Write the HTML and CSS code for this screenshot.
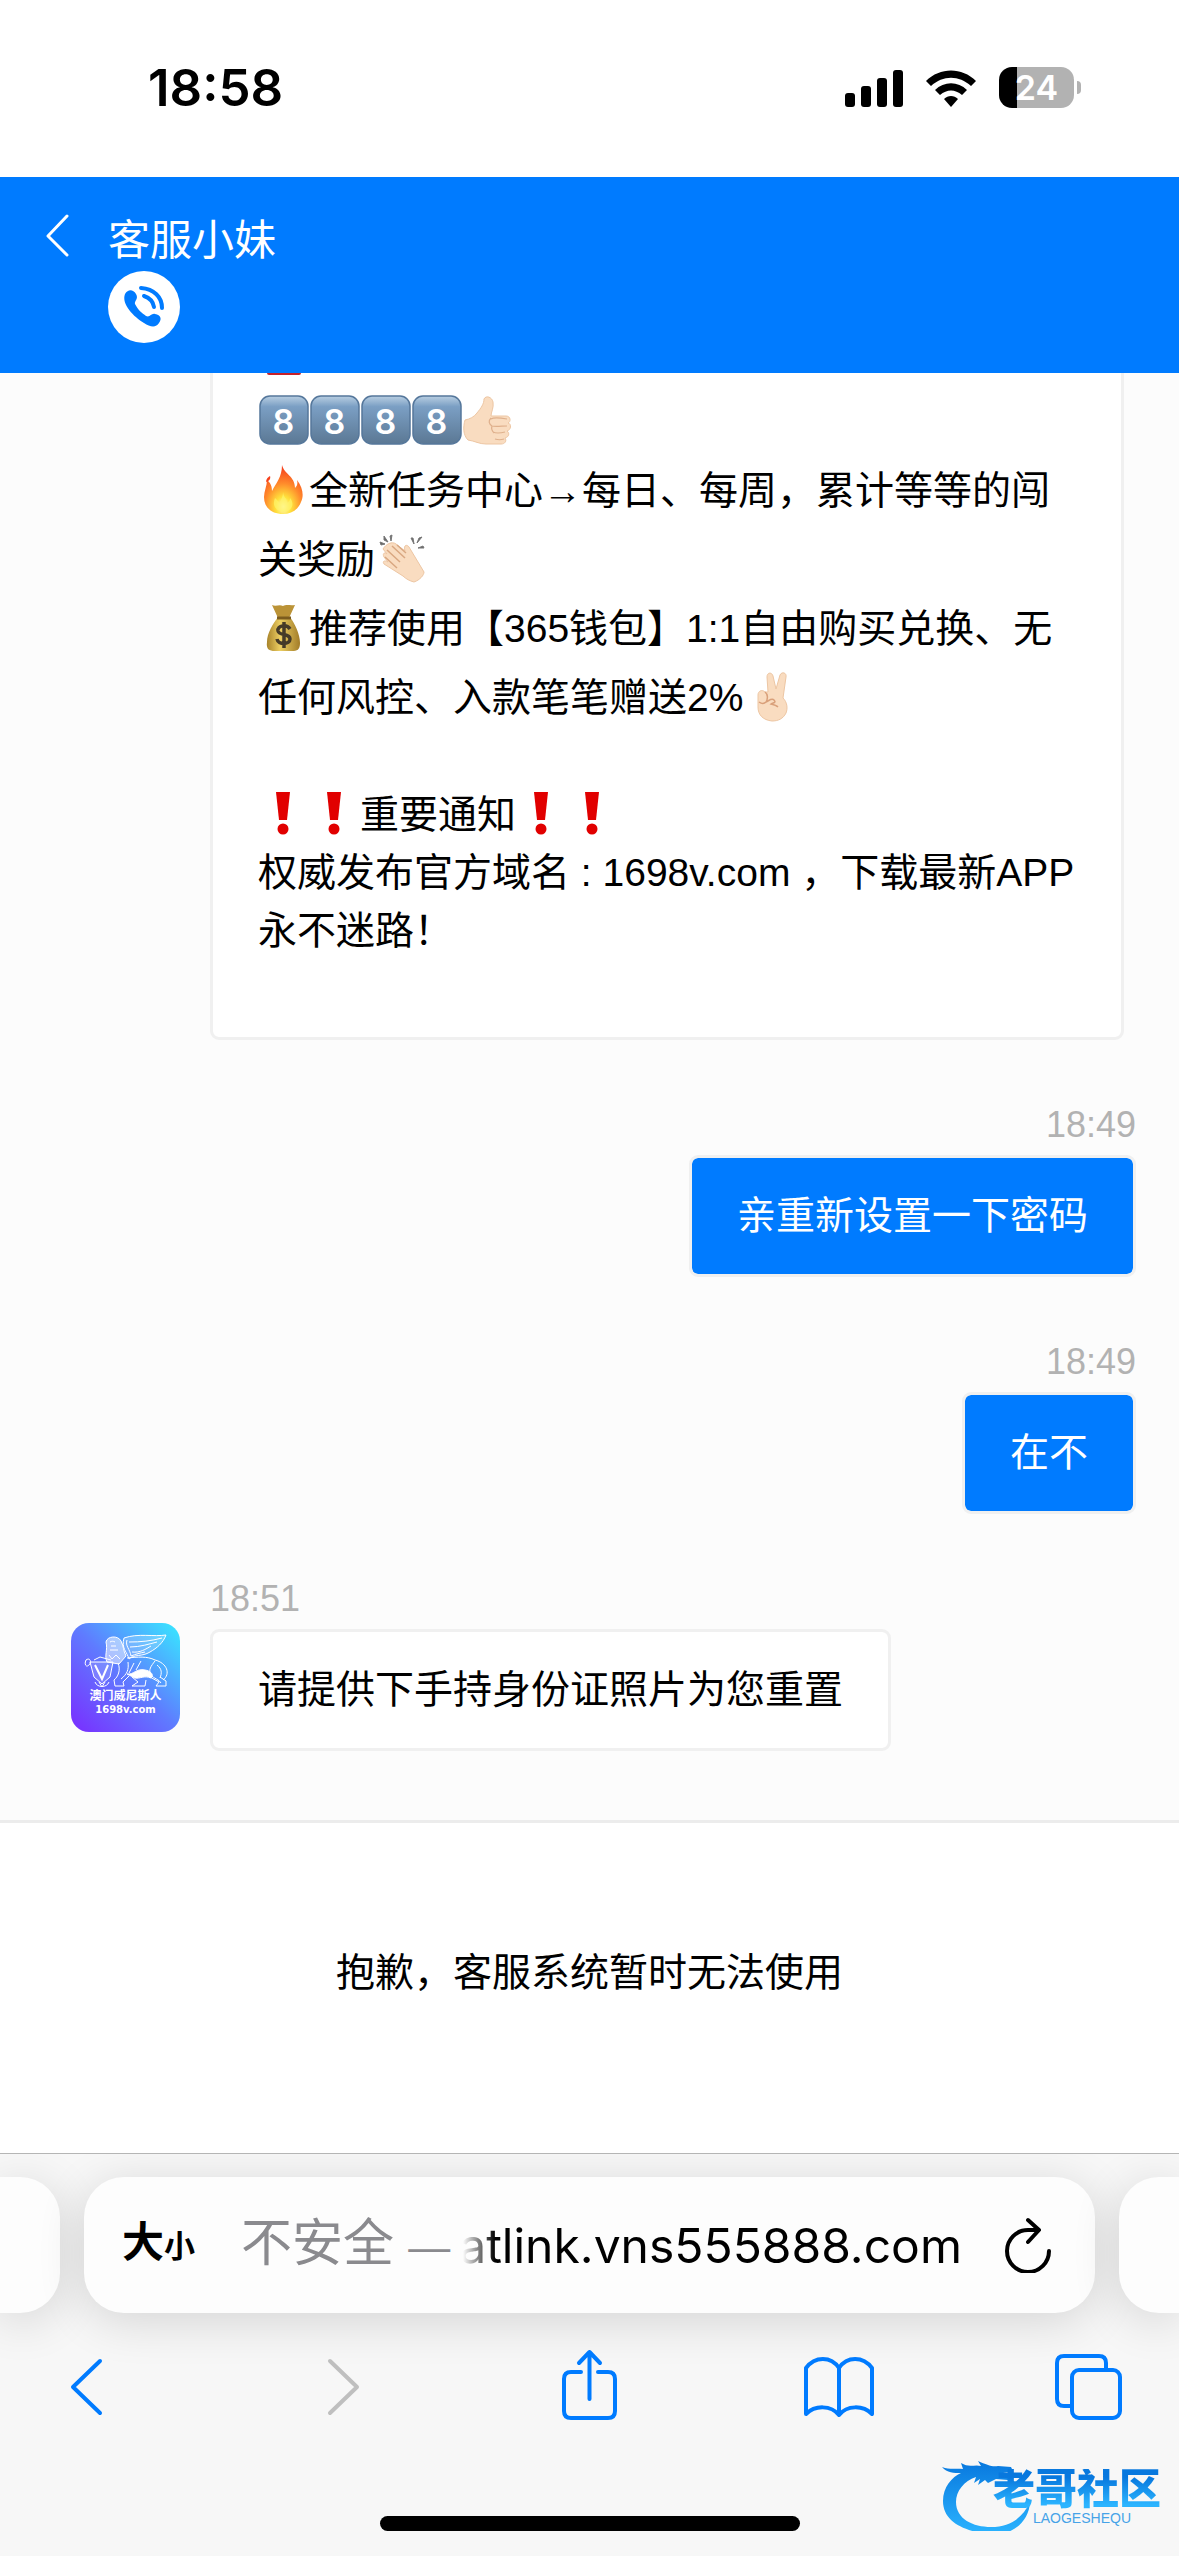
FILE: index.html
```html
<!DOCTYPE html>
<html lang="zh-CN">
<head>
    <meta charset="UTF-8">
    <meta name="viewport" content="width=device-width, initial-scale=1.0">
    <title>客服小妹</title>
    <link rel="stylesheet" href="styles.css">
</head>
<body>
    <!-- Shared emoji shapes -->
    <svg class="defs" aria-hidden="true">
        <defs>
            <linearGradient id="keyFill" x1="0" y1="0" x2="0" y2="1">
                <stop offset="0" stop-color="#b9cfe2"/>
                <stop offset="0.22" stop-color="#7b9fc4"/>
                <stop offset="1" stop-color="#5b7894"/>
            </linearGradient>
            <radialGradient id="fireFill" cx="0.5" cy="0.85" r="0.8">
                <stop offset="0" stop-color="#fffbd0"/>
                <stop offset="0.25" stop-color="#ffe23c"/>
                <stop offset="0.6" stop-color="#ff8a2b"/>
                <stop offset="1" stop-color="#f6401c"/>
            </radialGradient>
            <linearGradient id="bagFill" x1="0" y1="0" x2="1" y2="0">
                <stop offset="0" stop-color="#a8832a"/>
                <stop offset="0.4" stop-color="#ecce62"/>
                <stop offset="1" stop-color="#a27c28"/>
            </linearGradient>
            <symbol id="key" viewBox="0 0 51 51">
                <rect x="2" y="1" width="48" height="48" rx="10" fill="url(#keyFill)" stroke="#55779b" stroke-width="1.5"/>
            </symbol>
            <symbol id="bang" viewBox="0 0 51 51">
                <path d="M18 4h14l-3 28h-8z" fill="#e10000"/>
                <circle cx="25" cy="41" r="5.500" fill="#e10000"/>
            </symbol>
        </defs>
    </svg>

    <!-- Status bar -->
    <div class="status">
        <span class="clock">18:58</span>
        <div class="status-icons">
            <svg width="58" height="38" viewBox="0 0 58 38">
                <rect x="0" y="24" width="10" height="14" rx="3"/>
                <rect x="16" y="17" width="10" height="21" rx="3"/>
                <rect x="32" y="9" width="10" height="29" rx="3"/>
                <rect x="48" y="1" width="10" height="37" rx="3"/>
            </svg>
            <svg width="52" height="38" viewBox="0 0 52 38">
                <path d="M1 12C15-2 37-2 51 12l-5 5C34 6 18 6 6 17z"/>
                <path d="M10 21c9-9 23-9 32 0l-5 5c-7-6-15-6-22 0z"/>
                <path d="M19 30c4-4 10-4 14 0l-7 8z"/>
            </svg>
            <div class="battery"><span>24</span></div>
        </div>
    </div>

    <!-- Chat header -->
    <header class="header">
        <button class="back" aria-label="返回">
            <svg width="26" height="44" viewBox="0 0 26 44"><path d="M22 2L3 22l19 19"/></svg>
        </button>
        <div>
            <h1>客服小妹</h1>
            <button class="call" aria-label="语音通话">
                <svg width="72" height="72" viewBox="0 0 72 72">
                    <path d="M17 23c3-5 8-5 11 0 3 5-2 7-1 10 3 6 7 9 11 12 4 2 5-3 9-2 6 1 7 5 4 9-3 5-9 4-15 0C26 46 13 33 17 23z" fill="#007bff"/>
                    <path d="M36 25c6 2 9 5 10 11M33 17c13 1 21 9 21 20" fill="none" stroke="#007bff" stroke-width="4" stroke-linecap="round"/>
                </svg>
            </button>
        </div>
    </header>

    <!-- Messages -->
    <main class="chat">
        <div class="bubble notice">
            <p class="rich"><svg class="emoji" viewBox="0 0 51 51"><rect x="9" y="2" width="34" height="47" rx="2" fill="#c5222b"/></svg></p>
            <p class="rich"><span class="keycap"><svg class="emoji"><use href="#key"/></svg><b>8</b></span><span class="keycap"><svg class="emoji"><use href="#key"/></svg><b>8</b></span><span class="keycap"><svg class="emoji"><use href="#key"/></svg><b>8</b></span><span class="keycap"><svg class="emoji"><use href="#key"/></svg><b>8</b></span><svg class="emoji" viewBox="0 0 51 51">
                <path d="M3 25c5-1 9-3 12-7 4-5 7-9 7-14 2-4 8-2 9 3 1 6-2 10-2 14h15c5 0 5 6 2 7 4 1 3 7-1 8 3 2 2 6-2 7 2 3 0 6-4 6H24c-7 0-11-3-18-4-5-5-5-13-3-20z" fill="#f9dcc0" stroke="#edc6a3"/>
                <path d="M29 24c3-2 10-1 16 0M29 31c5 1 11 0 16 0M31 37c4 2 8 1 12 0M33 44c3 1 6 1 9 0M29 23c-3 3-2 6 1 8M30 31c-1 3 0 5 2 7" fill="none" stroke="#dfb08c" stroke-width="1.200"/>
            </svg></p>
            <p class="rich"><svg class="emoji" viewBox="0 0 51 51">
                <path d="M24 1c2 9 13 11 13 23 2-2 3-4 2-8 6 8 7 16 4 22-3 8-10 12-18 12C13 50 6 43 6 33c0-6 3-11 3-17 4 3 5 7 5 11 4-8 10-14 10-26z" fill="url(#fireFill)"/>
                <path d="M8 18c0-3 2-5 4-6 1 3-1 5-4 6z" fill="#f6401c"/>
                <path d="M25 28c1 7 4 5 4 11 2-1 3-3 3-5 5 6 2 13-6 14-9-1-12-7-9-14 2 2 3 3 5 5 1-4 3-6 3-11z" fill="#fff36b" fill-opacity="0.700"/>
            </svg>全新任务中心→每日、每周，累计等等的闯<br>关奖励<svg class="emoji" viewBox="0 0 51 51">
                <path d="M8 16c3-5 9-8 13-5l9 7c-2-6 2-7 4-4l6 10 9 15c0 3-4 8-10 10-4-1-8-3-11-6L9 31c-2-3 1-4 4-2l-4-5c-2-4 1-5 3-3z" fill="#f9dcc0" stroke="#edc6a3"/>
                <path d="M12 17l13 12M17 13l13 12M10 24l12 11M22 12l9 8" fill="none" stroke="#d9a781" stroke-width="1.5"/>
                <path d="M5 9l5 2-4 1zM9 3l4 6-4-2zM17 2l-1 6-1-5zM36 5l3 6-1-6zM47 4l-5 6 2-5zM49 15h-6l5-2z" fill="#666" stroke="#777"/>
            </svg></p>
            <p class="rich"><svg class="emoji" viewBox="0 0 51 51">
                <path d="M14 3c4 2 7-1 11 1 4-2 7 0 12-1l-6 13H20z" fill="#bb9337"/>
                <path d="M20 15h12c5 7 10 17 10 26 0 7-3 8-8 8H17c-6 0-9-2-8-9 0-9 6-18 11-25z" fill="url(#bagFill)"/>
                <path d="M19 16h14" stroke="#7c5c1e" stroke-width="3"/>
                <path d="M32 27c-3-5-13-4-12 2 1 5 12 2 12 8 0 6-12 6-13 0M26 20v26" fill="none" stroke="#453a28" stroke-width="3.500"/>
            </svg>推荐使用【365钱包】1:1自由购买兑换、无<br>任何风控、入款笔笔赠送2%<svg class="emoji" viewBox="0 0 51 51">
                <path d="M15 24c0-4 4-6 7-3h3L24 6c0-5 5-5 6-1l3 13 4-14c2-4 7-2 6 2l-3 21c4 4 5 10 3 15-3 6-8 8-14 8-9-1-14-6-14-14z" fill="#f9dcc0" stroke="#edc6a3"/>
                <path d="M22 21c3 2 3 7 1 10M16 31c3 2 5 2 7 0 4-2 6-4 8-2 3 3-2 3-3 4 4 1 6 2 7 3" fill="none" stroke="#d9a07a" stroke-width="1.500"/>
            </svg></p>
            <p class="blank"></p>
            <p><svg class="emoji"><use href="#bang"/></svg><svg class="emoji"><use href="#bang"/></svg>重要通知<svg class="emoji"><use href="#bang"/></svg><svg class="emoji"><use href="#bang"/></svg></p>
            <p>权威发布官方域名 : 1698v.com ，下载最新APP<br>永不迷路！</p>
        </div>

        <div class="message own">
            <time>18:49</time>
            <p class="bubble">亲重新设置一下密码</p>
        </div>

        <div class="message own">
            <time>18:49</time>
            <p class="bubble">在不</p>
        </div>

        <div class="message received">
            <div class="avatar">
                <svg width="84" height="54" viewBox="0 0 84 54" fill="none" stroke="#fff">
                    <path d="M40 4c14-5 30-1 42-3-3 8-9 13-16 17-8 5-16 2-21 7-2-7-8-11-5-21z" fill="#fff" fill-opacity="0.200"/>
                    <path d="M45 8c12 0 22-1 33-4M46 13c10 0 19-3 27-5M48 18c8 1 14-3 19-6M47 22c5-2 9-3 14-4M43 6c-2 6 3 9 4 16"/>
                    <path d="M22 8c1-6 12-7 15-1 3 6 2 9 5 15l-7 8-12-2c-3-6 1-12-1-20z" fill="#fff" fill-opacity="0.500"/>
                    <path d="M26 8c2-1 3-1 5 0M27 12h5M26 16h8M25 21l3 4 4-4 4 4"/>
                    <path d="M43 24c11-1 20-2 28 2 12 3 16 14 8 20M44 28c1 8-1 12-7 17M71 27c-4 5-7 9-4 14 3 4 8 4 10 8M50 29l-5 10M57 27l-5 9M73 31c5 4 5 8 3 13"/>
                    <path d="M43 40c7 1 9-6 18-4 7 1 9 6 6 8-7-3-11 1-16 0z" fill="#fff"/>
                    <path d="M34 29c3 7 0 14-4 17l1 6h9l-1-4 6-6M48 43l6 5-6 4h13l1-6M66 43l9 5-3 4h10v-5l-6-4"/>
                    <path d="M6 28h23l-3 15-8 7-8-7z" fill="#fff" fill-opacity="0.150"/>
                    <path d="M11 31l7 14 6-14" stroke-width="2"/>
                    <path d="M2 26c4-3 6 2 3 5-3 3-5-1-3-5zM10 26l6-3 11 3M11 48c2 6 12 6 14 0M15 48l3 5 3-5"/>
                </svg>
                <span class="avatar-name">澳门威尼斯人</span>
                <span class="avatar-site">1698v.com</span>
            </div>
            <div>
                <time>18:51</time>
                <p class="bubble">请提供下手持身份证照片为您重置</p>
            </div>
        </div>
    </main>

    <!-- Composer is replaced by this note while support is offline -->
    <section class="offline">
        <p>抱歉，客服系统暂时无法使用</p>
    </section>

    <!-- Browser bar -->
    <footer class="browser">
        <div class="tabs">
            <div class="pill side left"></div>
            <div class="pill address">
                <button class="text-size" aria-label="大小"><span class="big">大</span><span class="small">小</span></button>
                <label for="url">不安全 <span class="dash">—</span></label>
                <input type="text" id="url" value="atlink.vns555888.com" readonly>
                <button class="reload" aria-label="重新载入">
                    <svg width="48" height="56" viewBox="0 0 48 56"><path d="M44 34a21 21 0 1 1-21-21h10M23 3l11 10-11 12"/></svg>
                </button>
            </div>
            <div class="pill side right"></div>
        </div>
        <nav class="toolbar">
            <button aria-label="后退"><svg viewBox="0 0 72 72"><path d="M48 13L21 39l27 26"/></svg></button>
            <button class="disabled" aria-label="前进"><svg viewBox="0 0 72 72"><path d="M27 13l27 26-27 26"/></svg></button>
            <button aria-label="分享"><svg viewBox="0 0 72 72"><path d="M27 24H17q-7 0-7 7v32q0 7 7 7h37q7 0 7-7V31q0-7-7-7H44M35.500 51V4M25 15L35.500 4 46 15"/></svg></button>
            <button aria-label="书签"><svg viewBox="0 0 72 72"><path d="M35 20C27 8 11 8 2 20v46c9-9 25-9 33 1 8-10 24-10 33-1V20C59 8 43 8 35 20zM35 20v47"/></svg></button>
            <button aria-label="标签页"><svg viewBox="0 0 72 72"><path d="M15 58H9q-7 0-7-7V15q0-7 7-7h35q7 0 7 7v6"/><rect x="17" y="22" width="48" height="48" rx="7"/></svg></button>
        </nav>
        <div class="home"></div>
        <div class="watermark">
            <svg width="92" height="76" viewBox="0 0 92 76">
                <defs>
                    <linearGradient id="dragon" x1="0" y1="0" x2="0" y2="1">
                        <stop offset="0" stop-color="#0878de"/>
                        <stop offset="1" stop-color="#2bb4ff"/>
                    </linearGradient>
                </defs>
                <path d="M1 12c8 3 14 1 21 2l-2-6c8 5 14 1 20 3l-3-5c9 4 14 6 20 5l13 1 2 4-10 2 8 3-3 4-12-1-8 4-3-3-7 5 2-6-6 4 2-6c-12 4-20 14-20 25 0 17 17 25 35 25 20 0 32-10 39-25-1 19-16 33-39 33C23 76 2 67 2 46c0-14 9-24 18-28-7 0-14 0-19-6z" fill="url(#dragon)"/>
            </svg>
            <div>
                <strong>老哥社区</strong>
                <small>LAOGESHEQU</small>
            </div>
        </div>
    </footer>
</body>
</html>
```
FILE: styles.css
```css
* {
    box-sizing: border-box;
}

body {
    display: flex;
    flex-direction: column;
    height: 100vh;
    margin: 0;
    background-color: #fff;
    color: #000;
    font-family: "Liberation Sans", "Noto Sans CJK SC", sans-serif;
    font-size: 39px;
    line-height: 58px;
}

h1, p {
    margin: 0;
    font-weight: normal;
}

button {
    padding: 0;
    border: none;
    background: none;
    color: inherit;
    font: inherit;
    cursor: pointer;
}

svg {
    display: block;
}

.defs {
    position: absolute;
    width: 0;
    height: 0;
}

/* Status bar */
.status {
    display: flex;
    justify-content: space-between;
    align-items: center;
    flex: none;
    height: 177px;
    padding: 0 105px 2px 148px;
}

.clock {
    font-family: Inter, sans-serif;
    font-size: 51px;
    font-weight: 600;
}

.status-icons {
    display: flex;
    align-items: center;
    gap: 22px;
}

.battery {
    position: relative;
    width: 75px;
    height: 41px;
    border-radius: 13px;
    background: linear-gradient(to right, #000 18px, #b2b2b2 18px);
    color: #fff;
    font-family: Inter, sans-serif;
    font-size: 34px;
    font-weight: 600;
    line-height: 41px;
    text-align: center;
}

.battery::after {
    content: "";
    position: absolute;
    top: 14px;
    right: -7px;
    width: 4px;
    height: 13px;
    border-radius: 0 6px 6px 0;
    background-color: #b2b2b2;
}

/* Chat header */
.header {
    display: flex;
    align-items: flex-start;
    gap: 37px;
    flex: none;
    height: 196px;
    padding: 35px 45px;
    background-color: #007bff;
    color: #fff;
}

.header h1 {
    font-size: 42px;
    line-height: 58px;
}

.back {
    padding-top: 2px;
}

.back path {
    fill: none;
    stroke: #fff;
    stroke-width: 3;
    stroke-linecap: round;
    stroke-linejoin: round;
}

.call {
    display: block;
    margin-top: 1px;
    border-radius: 50%;
    background-color: #fff;
}

/* Messages */
.chat {
    display: flex;
    flex-direction: column;
    justify-content: flex-end;
    flex: 1;
    min-height: 0;
    overflow: hidden;
    padding: 0 43px 69px 71px;
    background-color: #fcfcfc;
}

.bubble {
    padding: 29px 45px;
    border: 3px solid #f0f0f0;
    border-radius: 9px;
    background-color: #fff;
    background-clip: padding-box;
}

.notice {
    margin: 0 12px 0 139px;
    padding-bottom: 77px;
}

.rich {
    line-height: 69px;
}

.blank {
    height: 54px;
}

.emoji {
    display: inline-block;
    width: 51px;
    height: 51px;
    vertical-align: -11px;
}

.keycap {
    display: inline-block;
    position: relative;
}

.keycap b {
    position: absolute;
    inset: 0;
    color: #fff;
    font-family: Inter, sans-serif;
    font-size: 34px;
    font-weight: 600;
    text-align: center;
}

.message {
    margin-top: 61px;
}

time {
    display: block;
    margin-bottom: 6px;
    color: #b2b2b2;
    font-size: 36px;
    line-height: 48px;
}

.own {
    display: flex;
    flex-direction: column;
    align-items: flex-end;
}

.own .bubble {
    background-color: #007bff;
    color: #fff;
}

.received {
    display: flex;
    align-items: flex-start;
    gap: 30px;
}

.avatar {
    display: flex;
    flex-direction: column;
    align-items: center;
    width: 109px;
    height: 109px;
    margin-top: 48px;
    padding-top: 11px;
    border-radius: 18px;
    background: linear-gradient(to top right, #7a2cff, #5f7bff 50%, #3bdfff 95%);
    color: #fff;
    font-weight: bold;
}

.avatar-name {
    font-size: 12px;
    line-height: 16px;
}

.avatar-site {
    font-family: "DejaVu Sans", sans-serif;
    font-size: 10px;
    line-height: 12px;
}

/* Offline note */
.offline {
    flex: none;
    padding: 121px 40px 151px;
    border-top: 3px solid #ececec;
    text-align: center;
}

/* Browser bar */
.browser {
    position: relative;
    flex: none;
    overflow: hidden;
    padding: 23px 0 25px;
    border-top: 1px solid #b5b5b5;
    background-color: #f7f7f7;
}

.tabs {
    display: flex;
    gap: 24px;
}

.pill {
    height: 136px;
    border-radius: 40px;
    background-color: #fdfdfd;
    box-shadow: 0 8px 48px rgba(0, 0, 0, 0.14);
}

.side {
    width: 60px;
}

.left {
    border-radius: 0 40px 40px 0;
}

.right {
    border-radius: 40px 0 0 40px;
}

.address {
    display: flex;
    align-items: center;
    flex: 1;
    min-width: 0;
    padding: 0 42px 0 38px;
    font-size: 51px;
}

.text-size {
    display: flex;
    align-items: baseline;
    font-weight: bold;
}

.big {
    font-size: 42px;
}

.small {
    font-size: 31px;
}

.address label {
    margin-left: 46px;
    color: #8a8a8e;
    white-space: nowrap;
}

.dash {
    font-size: 42px;
}

.address input {
    flex: 1;
    min-width: 0;
    margin-left: 9px;
    padding: 0;
    border: none;
    outline: none;
    background: none;
    color: #000;
    font-family: Inter, sans-serif;
    font-size: 48px;
    text-align: right;
    -webkit-mask-image: linear-gradient(to right, transparent 4px, #000 36px);
    mask-image: linear-gradient(to right, transparent 4px, #000 36px);
}

.reload {
    margin-left: 44px;
}

.reload path {
    fill: none;
    stroke: #000;
    stroke-width: 4;
    stroke-linecap: round;
    stroke-linejoin: round;
}

.toolbar {
    display: flex;
    justify-content: space-between;
    margin-top: 35px;
    padding: 0 52px;
}

.toolbar svg {
    width: 72px;
    height: 72px;
    fill: none;
    stroke: #007bff;
    stroke-width: 4;
    stroke-linecap: round;
    stroke-linejoin: round;
}

.toolbar .disabled svg {
    stroke: #bfbfbf;
}

.home {
    width: 420px;
    height: 15px;
    margin: 96px auto 0;
    border-radius: 8px;
    background-color: #000;
}

/* Watermark lies over the bar */
.watermark {
    position: absolute;
    right: 18px;
    bottom: 25px;
    display: flex;
    align-items: flex-end;
}

.watermark div {
    display: flex;
    flex-direction: column;
    margin-left: -40px;
    padding-bottom: 6px;
}

.watermark strong {
    background: linear-gradient(#0878de 20%, #2bb4ff 85%);
    -webkit-background-clip: text;
    background-clip: text;
    color: transparent;
    font-size: 42px;
    font-weight: 900;
    line-height: 42px;
}

.watermark small {
    align-self: center;
    margin-left: 10px;
    color: #46a3e8;
    font-size: 14px;
    line-height: 14px;
}
```
